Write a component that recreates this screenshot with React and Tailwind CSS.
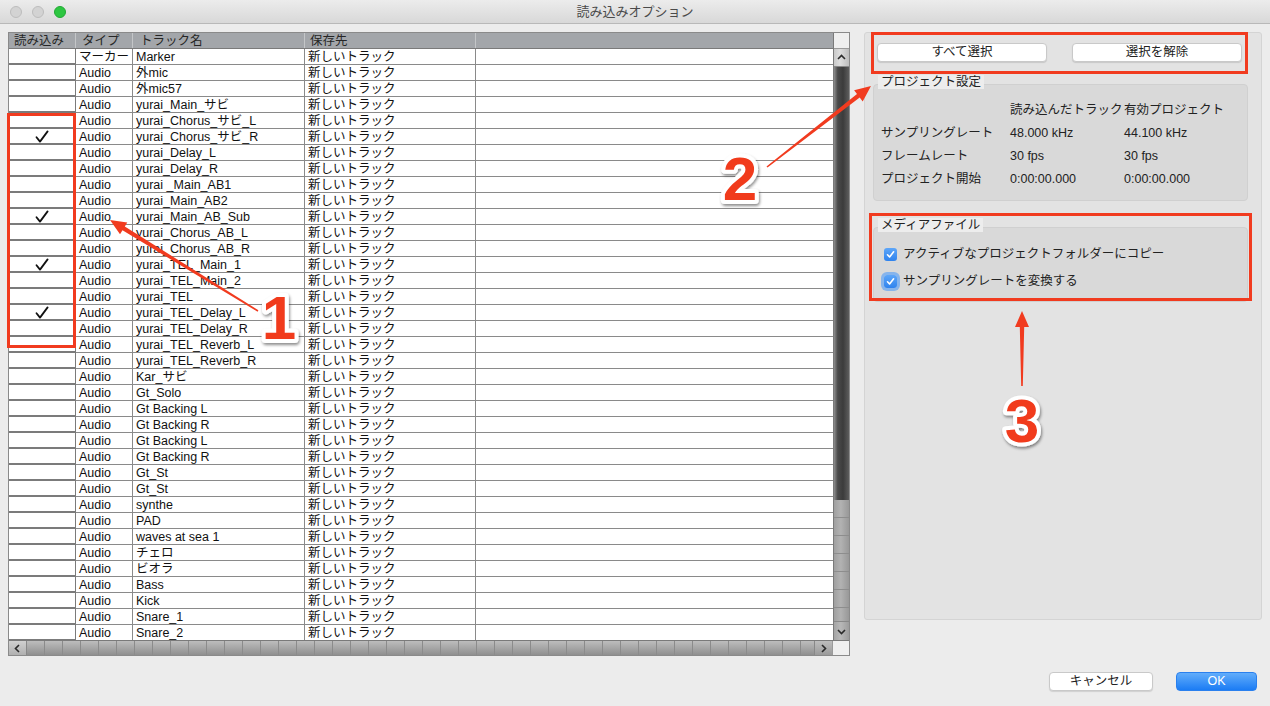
import React from "react";

const FONT = "font-['Liberation_Sans','Noto_Sans_CJK_JP',sans-serif]";
const RED = "#f13b1f";

const tracks = [
  ["マーカー", "Marker"],
  ["Audio", "外mic"],
  ["Audio", "外mic57"],
  ["Audio", "yurai_Main_サビ"],
  ["Audio", "yurai_Chorus_サビ_L"],
  ["Audio", "yurai_Chorus_サビ_R", true],
  ["Audio", "yurai_Delay_L"],
  ["Audio", "yurai_Delay_R"],
  ["Audio", "yurai _Main_AB1"],
  ["Audio", "yurai_Main_AB2"],
  ["Audio", "yurai_Main_AB_Sub", true],
  ["Audio", "yurai_Chorus_AB_L"],
  ["Audio", "yurai_Chorus_AB_R"],
  ["Audio", "yurai_TEL_Main_1", true],
  ["Audio", "yurai_TEL_Main_2"],
  ["Audio", "yurai_TEL"],
  ["Audio", "yurai_TEL_Delay_L", true],
  ["Audio", "yurai_TEL_Delay_R"],
  ["Audio", "yurai_TEL_Reverb_L"],
  ["Audio", "yurai_TEL_Reverb_R"],
  ["Audio", "Kar_サビ"],
  ["Audio", "Gt_Solo"],
  ["Audio", "Gt Backing L"],
  ["Audio", "Gt Backing R"],
  ["Audio", "Gt Backing L"],
  ["Audio", "Gt Backing R"],
  ["Audio", "Gt_St"],
  ["Audio", "Gt_St"],
  ["Audio", "synthe"],
  ["Audio", "PAD"],
  ["Audio", "waves at sea 1"],
  ["Audio", "チェロ"],
  ["Audio", "ビオラ"],
  ["Audio", "Bass"],
  ["Audio", "Kick"],
  ["Audio", "Snare_1"],
  ["Audio", "Snare_2"],
];

function Tick() {
  return (
    <svg width="14" height="13" viewBox="0 0 14 13">
      <path d="M1.5 7.2 L5 11.6 L12.6 1.4" fill="none" stroke="#111" strokeWidth="1.8" strokeLinecap="round" strokeLinejoin="round" />
    </svg>
  );
}

function Chevron({ dir }) {
  const pts = {
    up: "2,7 5.5,3.5 9,7",
    down: "2,4 5.5,7.5 9,4",
    left: "7,2 3.5,5.5 7,9",
    right: "4,2 7.5,5.5 4,9",
  }[dir];
  return (
    <svg width="11" height="11" viewBox="0 0 11 11">
      <polyline points={pts} fill="none" stroke="#2a2a2a" strokeWidth="1.6" />
    </svg>
  );
}

function Arrow({ x1, y1, x2, y2 }) {
  const len = Math.hypot(x2 - x1, y2 - y1);
  const ux = (x2 - x1) / len;
  const uy = (y2 - y1) / len;
  const nx = -uy;
  const ny = ux;
  const bx = x2 - ux * 16;
  const by = y2 - uy * 16;
  const p = (x, y) => `${x.toFixed(1)},${y.toFixed(1)}`;
  const points = [
    p(x1 + nx * 0.8, y1 + ny * 0.8),
    p(bx + nx * 2.2, by + ny * 2.2),
    p(bx + nx * 7, by + ny * 7),
    p(x2, y2),
    p(bx - nx * 7, by - ny * 7),
    p(bx - nx * 2.2, by - ny * 2.2),
    p(x1 - nx * 0.8, y1 - ny * 0.8),
  ].join(" ");
  return <polygon points={points} fill={RED} />;
}

function BigNum({ x, y, children }) {
  return (
    <text
      x={x}
      y={y}
      textAnchor="middle"
      fontFamily="'Liberation Sans', sans-serif"
      fontWeight="700"
      fontSize="62"
      fill={RED}
      stroke="#fff"
      strokeWidth="8"
      strokeLinejoin="round"
      paintOrder="stroke"
      filter="url(#shadow)"
    >
      {children}
    </text>
  );
}

function TrackTable() {
  return (
    <div className="w-[842px] h-[624px] border border-[#8a8a8a] bg-white flex flex-col">
      <div className="flex h-[607px]">
        <div className="w-[824px] flex flex-col">
          <div className="flex h-[16px] shrink-0 bg-[#a3a6aa] text-[12.5px] leading-none text-[#262626] border-b border-[#7a7a7a]">
            <div className="w-[67px] pl-[5px] pt-[2px] border-r border-[#c4c6c8] flex items-center">読み込み</div>
            <div className="w-[57px] pl-[6px] pt-[2px] border-r border-[#c4c6c8] flex items-center">タイプ</div>
            <div className="w-[172px] pl-[7px] pt-[2px] border-r border-[#c4c6c8] flex items-center">トラック名</div>
            <div className="w-[171px] pl-[5px] pt-[2px] border-r border-[#c4c6c8] flex items-center">保存先</div>
            <div className="flex-1" />
          </div>
          <div className="flex-1 overflow-hidden text-[12.5px] text-[#111]">
            {tracks.map(([type, name, on], i) => (
              <div key={i} className="flex h-[16px]">
                <div className="w-[67px] border-r border-b-2 border-[#7b7b7b] bg-white flex items-center justify-center">
                  {on && <Tick />}
                </div>
                <div className="w-[57px] pl-[3px] pt-[2px] border-r border-b border-[#8a8a8a] flex items-center leading-none">{type}</div>
                <div className="w-[172px] pl-[3px] pt-[2px] border-r border-b border-[#8a8a8a] flex items-center leading-none">{name}</div>
                <div className="w-[171px] pl-[3px] pt-[2px] border-r border-b border-[#8a8a8a] flex items-center leading-none">新しいトラック</div>
                <div className="flex-1 border-b border-[#8a8a8a]" />
              </div>
            ))}
          </div>
        </div>
        <div className="w-[16px] flex flex-col border-l border-[#7a7a7a]">
          <div className="h-[16px] bg-[#efefef] border-b border-[#9a9a9a]" />
          <div className="h-[18px] bg-[linear-gradient(90deg,#c9c9c9,#dedede_40%,#bdbdbd)] border-b border-[#888] flex items-center justify-center">
            <Chevron dir="up" />
          </div>
          <div className="h-[433px] bg-[linear-gradient(90deg,#8e8e8e,#4b4b4b_25%,#3b3b3b_60%,#5d5d5d)]" />
          <div className="flex-1 bg-[image:repeating-linear-gradient(180deg,transparent_0_17px,#8d8d8d_17px_18px),linear-gradient(90deg,#a0a0a0,#b2b2b2_45%,#989898)]" />
          <div className="h-[19px] bg-[linear-gradient(90deg,#a4a4a4,#b8b8b8_45%,#9c9c9c)] border-t border-[#888] flex items-center justify-center">
            <Chevron dir="down" />
          </div>
        </div>
      </div>
      <div className="flex flex-1 border-t border-[#7a7a7a]">
        <div className="w-[18px] bg-[linear-gradient(180deg,#d0d0d0,#b0b0b0)] border-r border-[#888] flex items-center justify-center">
          <Chevron dir="left" />
        </div>
        <div className="flex-1 bg-[image:repeating-linear-gradient(90deg,transparent_0_17px,#8b8b8b_17px_18px),linear-gradient(180deg,#bdbdbd,#8f8f8f)]" />
        <div className="w-[18px] bg-[linear-gradient(180deg,#bdbdbd,#9a9a9a)] border-l border-[#888] flex items-center justify-center">
          <Chevron dir="right" />
        </div>
        <div className="w-[17px] bg-[#efefef] border-l border-[#9a9a9a]" />
      </div>
    </div>
  );
}

function GroupLabel({ children }) {
  return (
    <div className="relative z-10 ml-[5px] -mb-[5px] w-fit px-[3px] pt-[1px] bg-[#ededed] text-[12.5px] leading-[13px] text-[#222]">
      {children}
    </div>
  );
}

function Box({ checked, focus }) {
  return (
    <div
      className={
        "w-[13px] h-[13px] rounded-[3px] bg-[linear-gradient(180deg,#5ea6f8,#2f83ee)] flex items-center justify-center " +
        (focus ? "ring-[3px] ring-[#86b4ec]" : "")
      }
    >
      {checked && (
        <svg width="9" height="9" viewBox="0 0 9 9">
          <path d="M1.5 4.8 L3.6 7 L7.6 1.8" fill="none" stroke="#fff" strokeWidth="1.6" strokeLinecap="round" strokeLinejoin="round" />
        </svg>
      )}
    </div>
  );
}

function SidePanel() {
  return (
    <div className="w-[398px] flex flex-col">
      <div className="h-[588px] bg-[#e3e3e3] border border-[#d4d4d4] rounded-[3px] pt-[10px] pl-[12px] text-[12.5px] text-[#222]">
        <div className="flex gap-[25px]">
          <button className="w-[170px] h-[19px] bg-white rounded-[4px] border border-[#c9c9c9] shadow-[0_1px_1px_rgba(0,0,0,0.12)] text-[12.5px] leading-none text-[#222]">
            すべて選択
          </button>
          <button className="w-[170px] h-[19px] bg-white rounded-[4px] border border-[#c9c9c9] shadow-[0_1px_1px_rgba(0,0,0,0.12)] text-[12.5px] leading-none text-[#222]">
            選択を解除
          </button>
        </div>

        <div className="mt-[13px] -ml-[4px] w-[375px]">
          <GroupLabel>プロジェクト設定</GroupLabel>
          <div className="h-[117px] bg-[#d9d9d9] rounded-[4px] border border-[#d0d0d0] pt-[14px] pl-[7px] grid grid-cols-[129px_114px_1fr] auto-rows-[23px] items-center leading-none">
            <div />
            <div className="whitespace-nowrap">読み込んだトラック</div>
            <div>有効プロジェクト</div>
            <div>サンプリングレート</div>
            <div>48.000 kHz</div>
            <div>44.100 kHz</div>
            <div>フレームレート</div>
            <div>30 fps</div>
            <div>30 fps</div>
            <div>プロジェクト開始</div>
            <div>0:00:00.000</div>
            <div>0:00:00.000</div>
          </div>
        </div>

        <div className="mt-[17px] -ml-[4px] w-[375px]">
          <GroupLabel>メディアファイル</GroupLabel>
          <div className="h-[75px] bg-[#d9d9d9] rounded-[4px] border border-[#d0d0d0] pt-[20px] pl-[10px] flex flex-col gap-[14px] leading-none">
            <div className="flex items-center gap-[6px]">
              <Box checked />
              <span>アクティブなプロジェクトフォルダーにコピー</span>
            </div>
            <div className="flex items-center gap-[6px]">
              <Box checked focus />
              <span>サンプリングレートを変換する</span>
            </div>
          </div>
        </div>
      </div>

      <div className="mt-[52px] mr-[5px] flex justify-end gap-[23px]">
        <button className="w-[104px] h-[19px] bg-white rounded-[4px] border border-[#c9c9c9] shadow-[0_1px_1px_rgba(0,0,0,0.12)] text-[12.5px] leading-none text-[#222]">
          キャンセル
        </button>
        <button className="w-[81px] h-[19px] rounded-[4px] bg-[linear-gradient(180deg,#62adfb,#1b7cf4)] border border-[#2a80ee] text-[12.5px] leading-none text-white">
          OK
        </button>
      </div>
    </div>
  );
}

export default function App() {
  return (
    <div className={`${FONT} relative w-[1270px] h-[706px] overflow-hidden bg-[#ececec] flex flex-col`}>
      <div className="h-[24px] shrink-0 grid grid-cols-[1fr_auto_1fr] items-center bg-[linear-gradient(180deg,#ececec,#d8d8d8)] border-b border-[#b8b8b8]">
        <div className="flex items-center gap-[10px] pl-[10px]">
          <div className="w-[12px] h-[12px] rounded-full bg-[#d3d3d3] border border-[#bdbdbd]" />
          <div className="w-[12px] h-[12px] rounded-full bg-[#d3d3d3] border border-[#bdbdbd]" />
          <div className="w-[12px] h-[12px] rounded-full bg-[#2dc641] border border-[#22a934]" />
        </div>
        <div className="text-[13px] text-[#4a4a4a] leading-none">読み込みオプション</div>
        <div />
      </div>

      <div className="flex pt-[8px] pl-[8px] gap-[14px]">
        <TrackTable />
        <SidePanel />
      </div>

      <svg className="pointer-events-none absolute left-0 top-0" width="1270" height="706">
        <defs>
          <filter id="shadow" x="-30%" y="-30%" width="160%" height="160%">
            <feDropShadow dx="1" dy="2" stdDeviation="1.6" floodColor="#000" floodOpacity="0.45" />
          </filter>
        </defs>
        <rect x="8.5" y="114.5" width="66" height="232" fill="none" stroke={RED} strokeWidth="3" />
        <rect x="872.5" y="33.5" width="374" height="39" fill="none" stroke={RED} strokeWidth="3" />
        <rect x="870.5" y="214.5" width="380" height="85" fill="none" stroke={RED} strokeWidth="3" />
        <Arrow x1={258} y1={311} x2={110} y2={220} />
        <Arrow x1={767} y1={167} x2={871} y2={86} />
        <Arrow x1={1022} y1={386} x2={1022} y2={311} />
        <BigNum x={279} y={339}>1</BigNum>
        <BigNum x={740} y={200}>2</BigNum>
        <BigNum x={1022} y={442}>3</BigNum>
      </svg>
    </div>
  );
}
